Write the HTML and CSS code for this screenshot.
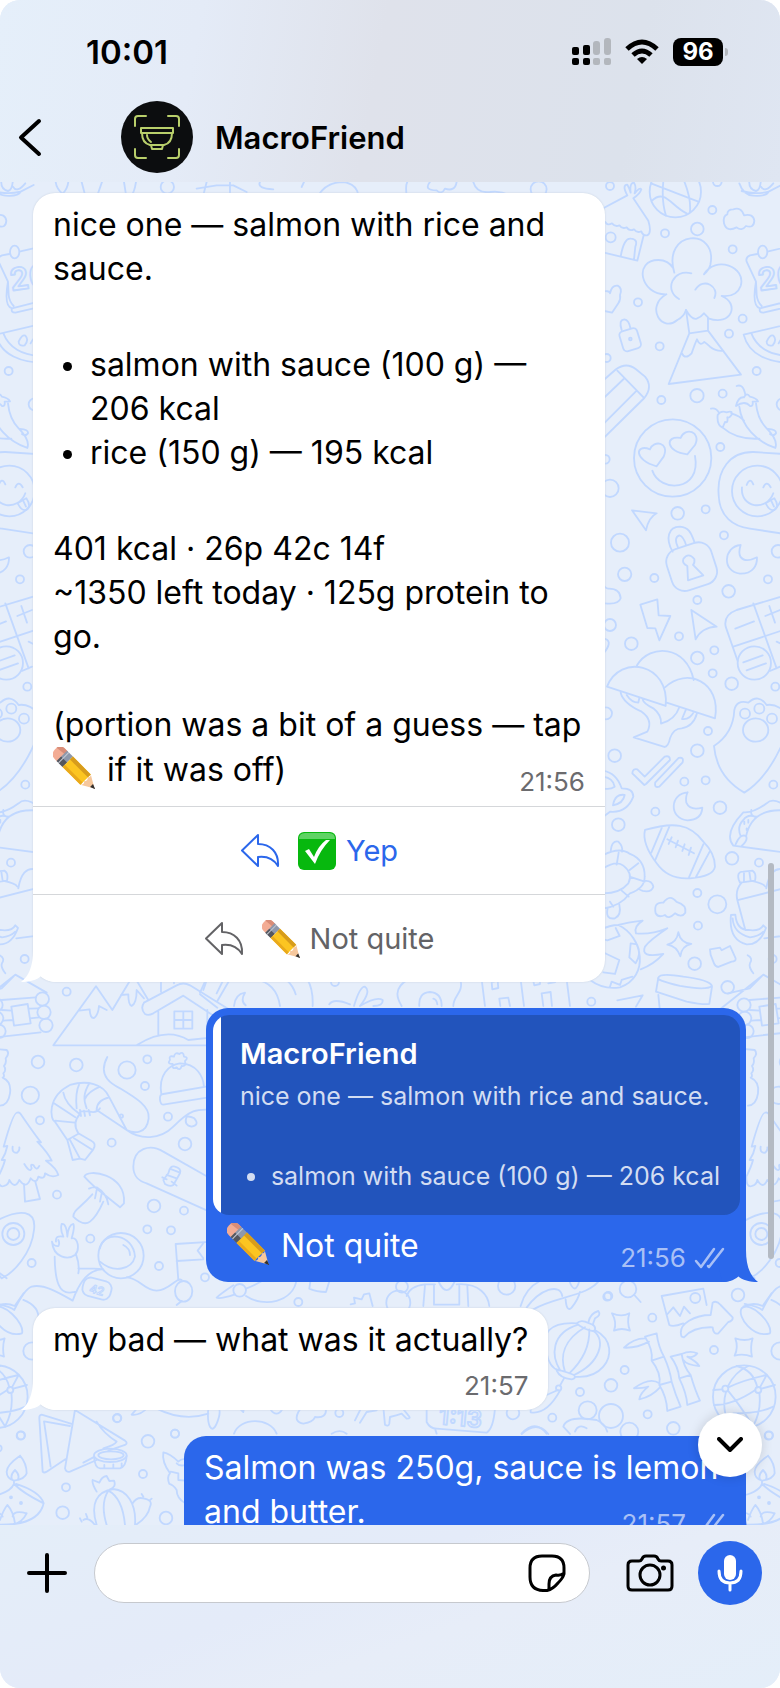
FILE: index.html
```html
<!DOCTYPE html>
<html lang="en">
<head>
	<meta charset="UTF-8">
	<meta name="viewport" content="width=device-width, initial-scale=1">
	<title>MacroFriend</title>
	<link rel="stylesheet" href="styles.css">
</head>
<body>
<!-- shared icons -->
<svg class="defs" width="0" height="0" aria-hidden="true">
	<symbol id="pencil" viewBox="0 0 40 40">
		<g transform="translate(7 7) rotate(45)">
			<path d="M3 -7H0Q-7 -7 -7 0T0 7H3z" fill="#f3ac94"/>
			<path d="M3 -7H0Q-6 -7 -7 -2L3 -3z" fill="#d98d78"/>
			<rect x="2" y="-7" width="8" height="14" fill="#8e98ab"/>
			<rect x="2" y="1" width="8" height="6" fill="#55575e"/>
			<rect x="4" y="-7" width="1" height="14" fill="#c4cad6"/>
			<path d="M10 -7H34V7H10z" fill="#fcc521"/>
			<path d="M10 -7H34V-3H10z" fill="#d79c1c"/>
			<path d="M10 4H34V7H10z" fill="#e9a91b"/>
			<path d="M34 -7L46 0L34 7Q37 4 34 2Q37 0 34 -3Q36 -5 34 -7z" fill="#f6c79c"/>
			<path d="M42 -2L47 0L42 2z" fill="#33302e"/>
		</g>
	</symbol>
	<symbol id="check" viewBox="0 0 38 38">
		<rect width="38" height="38" rx="6" fill="#07b80e"/>
		<path d="M1 7Q1 1 7 1H31Q37 1 37 7z" fill="#5fd364"/>
		<path d="M7 19L11 17L16 25Q20 14 28 8H32Q22 18 17 32z" fill="#fff"/>
	</symbol>
	<symbol id="reply" viewBox="0 0 40 36">
		<path d="M18 2L2 17.500L18 33V24C26 23 33 25 38 33C39 19 30 11 18 11z" fill="none" stroke="currentColor" stroke-width="2" stroke-linejoin="round"/>
	</symbol>
	<symbol id="ticks" viewBox="0 0 32 22">
		<path d="M2 14L7 20L20 2M14 19L15 20L29 2" fill="none" stroke="currentColor" stroke-width="2.500" stroke-linecap="round" stroke-linejoin="round"/>
	</symbol>
	<symbol id="tail" viewBox="0 0 40 40">
		<path d="M12 0V8C12 24 8 34 0 40C8 40 16 38 20 34C25 38 30 40 36 40L40 20V0z" fill="currentColor"/>
	</symbol>
</svg>

<div class="app">
	<header class="top">
		<div class="status">
			<span class="clock">10:01</span>
			<div class="status-icons">
				<svg width="39" height="28" viewBox="0 0 39 28">
					<g fill="#000">
						<rect x="0" y="9" width="7" height="8" rx="2"/><rect x="11" y="7" width="7" height="10" rx="2"/>
						<rect x="0" y="20" width="7" height="7" rx="2"/><rect x="11" y="20" width="7" height="7" rx="2"/>
					</g>
					<g fill="#b3b7bd">
						<rect x="21" y="3" width="7" height="14" rx="3"/><rect x="32" y="0" width="7" height="17" rx="3"/>
						<rect x="21" y="20" width="7" height="7" rx="2"/><rect x="32" y="20" width="7" height="7" rx="2"/>
					</g>
				</svg>
				<svg width="34" height="26" viewBox="0 0 34 26" fill="none" stroke="#000" stroke-width="5">
					<path d="M2 10Q17 -4 32 10M8 16Q17 8 26 16"/>
					<path d="M12 20Q17 16 22 20L17 25z" fill="#000" stroke="none"/>
				</svg>
				<span class="battery">96</span>
			</div>
		</div>
		<div class="bar">
			<button class="icon-btn back" aria-label="Back">
				<svg width="24" height="40" viewBox="0 0 24 40"><path d="M21 4L3 20.500L21 37" fill="none" stroke="#000" stroke-width="4" stroke-linecap="round" stroke-linejoin="round"/></svg>
			</button>
			<svg class="avatar" viewBox="0 0 72 72">
				<circle cx="36" cy="36" r="36" fill="#0c0d0f"/>
				<g fill="none" stroke="#b9cf6b" stroke-width="2" stroke-linecap="round" stroke-linejoin="round">
					<path d="M14 25V18Q14 15 17 15H25M47 15H55Q58 15 58 18V25M14 48V54Q14 57 17 57H25M47 57H55Q58 57 58 54V48"/>
					<path d="M20 27H52V32H20zM21 32Q21 42 29 44H43Q51 42 51 32M26 34Q26 38 30 41M30 44L31 48H41L42 44"/>
				</g>
			</svg>
			<h1 class="name">MacroFriend</h1>
		</div>
	</header>

	<main class="chat">
		<svg class="wallpaper" viewBox="0 182 780 1343" preserveAspectRatio="xMidYMin slice" aria-hidden="true">
			<defs>
			<g id="tile" stroke-width="5.500" stroke-linecap="round" stroke-linejoin="round">
				<!-- upper right: hut, volcano, smiley, padlock -->
				<g transform="translate(590 180) scale(.3333)">
					<circle cx="60" cy="18" r="12"/><circle cx="367" cy="90" r="12"/><circle cx="225" cy="160" r="12"/><circle cx="322" cy="147" r="19"/>
					<circle cx="428" cy="208" r="12"/><circle cx="62" cy="172" r="15"/><circle cx="144" cy="367" r="12"/><circle cx="209" cy="499" r="12"/>
					<circle cx="50" cy="534" r="12"/><circle cx="458" cy="416" r="12"/><circle cx="417" cy="461" r="12"/><circle cx="500" cy="573" r="12"/>
					<circle cx="214" cy="660" r="12"/><circle cx="321" cy="647" r="20"/><circle cx="398" cy="641" r="12"/><circle cx="391" cy="801" r="12"/>
					<circle cx="578" cy="673" r="18"/><circle cx="60" cy="925" r="26"/><circle cx="46" cy="838" r="13"/><circle cx="263" cy="1000" r="19"/>
					<circle cx="347" cy="988" r="12"/><circle cx="402" cy="1066" r="12"/><circle cx="90" cy="1088" r="27"/><circle cx="104" cy="1183" r="20"/>
					<circle cx="193" cy="1194" r="12"/><circle cx="416" cy="1234" r="19"/><circle cx="534" cy="1198" r="12"/><circle cx="564" cy="1114" r="19"/>
					<circle cx="382" cy="5" r="13"/>
					<path d="M448 10Q460 45 490 47Q530 50 536 35L575 15M455 33Q495 45 536 35M478 0Q475 28 498 33Q513 30 513 -10M513 20Q525 40 550 10"/>
					<circle cx="256" cy="35" r="77"/>
					<path d="M183 10L325 65M186 62C225 25 245 80 290 100M225 -30Q210 50 228 107M262 -40Q305 40 300 95"/>
					<path d="M30 90L112 46Q95 15 112 14Q118 25 122 38Q118 8 132 8Q140 20 134 40Q150 20 154 28Q150 42 130 55L175 122Q186 158 172 166Q158 168 154 154Q140 160 132 148Q118 155 110 142Q96 148 88 136Q76 142 66 130Q52 138 46 126L30 130M161 166L142 242L92 230L30 215M92 230Q102 172 123 176Q145 178 136 200L132 238"/>
					<path d="M412 103Q412 88 430 88Q454 80 462 106Q490 100 493 122Q492 146 468 138Q455 155 440 142Q410 158 402 130Q398 108 412 103"/>
					<path d="M253 278C215 150 385 140 361 255Q357 270 342 283C375 225 470 260 452 318Q440 352 395 348C450 370 425 440 355 415M229 343C150 345 130 240 205 240Q235 240 250 265M229 343C165 380 215 460 262 420Q282 410 288 390M304 280C250 265 220 330 267 357M316 329C340 290 390 320 373 354"/>
					<path d="M288 390Q305 420 320 416Q335 410 342 400L354 412V452L298 460zM298 460L236 612L453 584L354 452M276 520Q285 540 305 520Q315 490 321 478Q330 500 343 486Q350 490 360 500Q380 515 400 512"/>
					<path d="M30 335Q60 330 60 340Q65 315 83 317Q98 325 90 345Q93 358 85 370L66 398L30 390"/>
					<rect x="93" y="448" width="55" height="62" rx="12" transform="rotate(-17 121 479)"/><path d="M95 450Q85 420 103 418Q117 420 121 444"/><circle cx="121" cy="477" r="4"/>
					<path d="M30 610L78 568Q110 545 138 568L165 590Q190 620 163 654L40 775M82 572L162 654M101 597L30 665M140 632L30 742"/>
					<path d="M640 190L535 214M502 222L480 226Q466 232 470 245L498 305Q485 380 510 385L640 352M510 385Q506 398 520 398L640 370M498 305L500 345Q502 365 515 378"/><ellipse cx="518" cy="216" rx="14" ry="19"/>
					<text x="508" y="332" font-size="92" transform="rotate(-8 508 332)">26</text>
					<path d="M640 422L461 464C475 520 530 555 640 548M484 460C500 500 540 530 600 526M530 485Q540 462 550 467Q562 480 548 496Q530 500 530 485M566 490Q580 462 588 480"/>
					<path d="M440 618Q460 610 466 645M438 678Q445 650 462 652Q470 635 480 650Q500 655 504 664L488 665Q490 680 480 678Q465 660 438 678M448 680C455 740 500 785 556 804Q565 780 530 745C505 720 500 690 498 670M363 686Q378 682 388 700M398 743Q380 735 383 705Q392 690 410 697Q430 690 424 706Q418 715 412 712Q415 730 405 726zM398 743Q440 780 508 776M424 700Q450 708 462 722M534 747Q560 748 558 760Q550 770 540 762"/>
					<circle cx="248" cy="834" r="116"/><path d="M187 872C210 940 335 935 315 828M200 859C130 840 135 790 180 808C190 780 240 785 221 830zM292 823C225 815 225 765 272 774C285 740 335 755 315 795z"/>
					<path d="M700 830L490 816C420 815 380 870 386 945C388 1010 430 1040 480 1046L700 1080"/><circle cx="502" cy="933" r="76"/>
					<path d="M456 922C450 985 530 995 550 940M470 915Q480 890 490 913M520 922Q530 900 542 922M527 970L553 955Q570 980 553 990Q540 995 527 970M545 965L552 980"/>
					<path d="M126 991L200 1000Q176 1012 168 1051z"/>
					<rect x="235" y="1095" width="140" height="130" rx="40" transform="rotate(-18 305 1160)"/><path d="M248 1115C225 1075 235 1040 270 1040C300 1042 305 1065 314 1088M264 1102Q250 1072 268 1066Q280 1068 288 1095M292 1158Q275 1150 280 1137Q295 1115 313 1137Q315 1150 309 1155L340 1186L294 1201z"/>
					<path d="M452 1095C400 1100 395 1175 450 1181C490 1182 502 1155 501 1132Q465 1150 451 1130Q445 1118 452 1095M38 1210Q45 1225 55 1226Q90 1225 92 1255Q85 1275 45 1270"/>
				</g>
				<!-- top edge under the header -->
				<g transform="translate(0 182) scale(.3333)">
					<path d="M167 0Q170 22 188 35Q202 22 205 0M245 0L255 38M292 40L306 0M372 0L378 38M408 0Q402 40 390 40M590 20L650 10H700L740 30M610 40L620 0M690 40V0M780 0Q770 20 820 22M905 15L912 0M955 40Q980 0 1030 0Q1070 5 1075 40M1220 40Q1216 10 1222 0M1290 0Q1270 25 1310 25Q1325 40 1335 20Q1365 30 1370 0M1420 0Q1430 35 1470 30Q1500 25 1530 40"/>
					<circle cx="502" cy="15" r="20"/><circle cx="1616" cy="22" r="24"/>
				</g>
				<!-- right side: bolt, tree, rugby ball, turtle, football -->
				<g transform="translate(590 600) scale(.3333)">
					<circle cx="60" cy="75" r="18"/><circle cx="124" cy="131" r="19"/><circle cx="267" cy="109" r="12"/><circle cx="322" cy="174" r="19"/>
					<circle cx="373" cy="151" r="12"/><circle cx="368" cy="220" r="12"/><circle cx="425" cy="251" r="19"/><circle cx="556" cy="260" r="12"/>
					<circle cx="48" cy="340" r="18"/><circle cx="354" cy="393" r="12"/><circle cx="322" cy="452" r="19"/><circle cx="74" cy="467" r="19"/>
					<circle cx="283" cy="545" r="12"/><circle cx="347" cy="541" r="12"/><circle cx="550" cy="554" r="12"/><circle cx="390" cy="623" r="19"/>
					<circle cx="196" cy="635" r="12"/><circle cx="85" cy="674" r="19"/><circle cx="426" cy="775" r="19"/><circle cx="507" cy="788" r="12"/>
					<circle cx="322" cy="879" r="12"/><circle cx="382" cy="913" r="27"/><circle cx="324" cy="977" r="12"/><circle cx="314" cy="1091" r="19"/>
					<circle cx="413" cy="1162" r="19"/><circle cx="548" cy="1077" r="12"/><circle cx="322" cy="0" r="12"/>
					<path d="M151 14L202 -2L206 46L241 48L208 121L196 85L172 84zM304 30L380 80Q335 82 317 118zM40 115Q70 120 45 155"/>
					<path d="M640 -30L440 30Q400 45 407 80L443 183M490 10L560 205M430 140L640 70M436 86L492 64M526 48L570 30M538 18L555 68M560 125L580 135M540 213L570 200"/><circle cx="493" cy="189" r="50"/><path d="M460 187L518 166M470 211L528 190"/>
					<path d="M141 196C180 130 290 135 311 240M51 260C90 160 240 190 227 318zM225 262C290 200 395 245 375 355L230 308M92 278Q100 310 155 335Q190 360 172 395L131 412L223 441Q235 440 240 415Q250 385 275 385Q310 380 321 340M158 298Q160 310 190 325Q215 345 213 371Q255 360 268 322M110 285Q125 308 145 308L148 294M288 328L276 357Q300 360 312 335"/>
					<path d="M372 438Q430 400 433 330Q440 298 475 308Q505 280 530 315Q560 310 590 340M372 438Q380 530 463 578Q540 530 590 400"/><circle cx="465" cy="341" r="15"/><circle cx="508" cy="326" r="15"/><circle cx="546" cy="356" r="15"/><ellipse cx="497" cy="390" rx="38" ry="35"/>
					<path d="M163 555L127 520Q128 505 142 508L164 530L224 470Q240 465 240 480L168 552zM196 547L266 474Q282 470 278 487L208 560Q192 565 196 547"/>
					<path d="M293 577C240 580 235 655 292 661Q335 660 337 623Q300 633 289 608Q286 590 293 577"/>
					<path d="M40 512Q80 520 95 565Q130 565 130 590Q110 640 60 635L40 650M40 530Q70 535 74 560Q60 570 40 565M69 616Q75 580 104 585Q100 610 69 616"/>
					<path d="M165 690C250 665 300 670 340 725Q375 760 375 800Q370 830 300 835Q235 840 200 790Q155 730 165 690M216 682L184 758M238 680L195 782M340 733L297 832M359 755L318 831M232 718L312 760M245 712L236 732M264 722L257 742M284 733L277 753M303 743L296 765"/>
					<path d="M640 765L430 737Q400 700 460 637Q490 640 530 610Q550 590 590 620M484 630Q480 650 500 650M468 710C480 650 520 625 590 632M452 708Q440 680 460 660Q475 640 498 652M436 735Q450 700 468 708Q475 720 455 738M463 665V672M475 660V668M470 685V690"/>
					<path d="M40 765Q90 740 120 762Q165 780 164 830Q165 865 120 880Q90 920 40 925M40 805Q80 780 100 797Q130 820 115 850Q90 880 40 880M86 758L80 794M145 790L119 810M164 845L121 831M116 890L95 872M62 755Q65 720 85 725Q100 740 96 755M163 843Q185 840 190 860Q185 878 158 873Q150 870 145 866M53 925Q45 960 75 955Q95 945 88 914M70 920L60 905"/>
					<path d="M197 940Q190 905 220 908Q240 880 260 906Q290 915 286 938Q275 955 255 940Q235 960 225 945Q205 955 197 940"/>
					<path d="M30 990Q60 975 85 975Q110 968 158 962Q130 980 138 1000Q180 1005 232 985Q180 1020 165 1040Q150 1075 220 1062Q190 1095 152 1108M85 975C160 1010 180 1130 90 1162Q40 1170 0 1140M40 1018L52 1021L89 1008L77 984M122 1030L141 1033Q155 1060 137 1090L118 1072zM30 1055L50 1062L88 1080L75 1122L40 1117M60 1160L65 1145L90 1155L95 1140L127 1130"/>
					<path d="M265 997Q272 1030 304 1032Q275 1038 271 1069Q260 1038 232 1034Q260 1028 265 997M362 1065L360 1048L390 1043L395 1051L420 1038L437 1075Q438 1085 425 1085L385 1101Q375 1100 372 1090z"/>
					<path d="M473 1066Q490 1075 480 1090Q475 1100 490 1120M205 1133Q210 1118 280 1130Q360 1140 366 1158Q350 1172 270 1158Q195 1140 205 1133L198 1175L290 1205Q340 1215 358 1212L366 1160M82 1201L158 1186L138 1220M205 1185L210 1235"/>
					<path d="M446 838Q440 815 460 815L488 812Q500 820 495 842L450 848zM462 820V846M478 816L482 842M455 848Q435 870 442 900L466 990M485 843Q520 850 526 860M446 900L640 850M523 1015L640 1000M529 865Q540 800 580 808M423 945L436 944Q440 990 475 990Q510 995 520 976L528 984Q510 1035 470 1033Q415 1020 423 945M428 955Q430 1000 480 1012Q505 1010 520 995"/>
				</g>
				<!-- lower left: cabin, mountains, prawn, spaceman -->
				<g transform="translate(0 960) scale(.3333)">
					<circle cx="200" cy="95" r="12"/><circle cx="114" cy="306" r="19"/><circle cx="229" cy="315" r="19"/><circle cx="381" cy="330" r="26"/>
					<circle cx="442" cy="298" r="12"/><circle cx="435" cy="378" r="12"/><circle cx="91" cy="406" r="26"/><circle cx="120" cy="481" r="12"/>
					<circle cx="504" cy="470" r="12"/><circle cx="335" cy="548" r="12"/><circle cx="555" cy="552" r="19"/><circle cx="171" cy="704" r="12"/>
					<circle cx="462" cy="738" r="19"/><circle cx="552" cy="752" r="12"/><circle cx="442" cy="808" r="12"/><circle cx="513" cy="811" r="12"/>
					<circle cx="271" cy="836" r="12"/><circle cx="95" cy="909" r="12"/><circle cx="477" cy="918" r="12"/><circle cx="615" cy="952" r="12"/>
					<path d="M-80 145L46 44L140 98M46 44L5 85L-60 100M5 120L108 112M-40 235L122 217M5 150L36 152M88 146L115 145M10 182L38 180M90 175L118 172M34 140L83 132L92 190L42 197z"/>
					<circle cx="127" cy="117" r="20"/><circle cx="132" cy="157" r="20"/><circle cx="138" cy="196" r="20"/><circle cx="-12" cy="135" r="20"/><circle cx="-10" cy="175" r="20"/><circle cx="-3" cy="214" r="20"/>
					<path d="M-30 265L20 270Q30 280 17 295Q20 310 12 318Q20 330 10 340Q15 350 8 353Q35 365 30 400Q25 435 0 437"/>
					<path d="M660 256H160L288 79L337 150L400 45L445 120M237 152L269 148Q270 175 282 174Q295 165 297 138L320 150M363 105L385 103Q385 135 395 138Q410 130 410 90L432 115M475 155V226M622 150V230M432 128L530 76Q550 65 570 76L690 150M432 128Q420 145 435 162Q445 168 460 160L550 107L660 180M483 95V50M522 70V50M412 254Q500 200 565 240L640 232M523 154H577V206H523zM550 154V206M523 180H577M610 90L622 55M650 100L670 60"/>
					<path d="M322 291C290 350 340 375 360 385C410 415 450 440 446 475C440 525 400 520 380 510L290 450Q290 420 328 412L380 510C420 540 480 540 520 500C570 450 590 445 640 450M328 412C310 370 260 360 210 375C140 410 150 480 165 485L202 540L218 600L240 596L255 600L280 568Q290 550 275 543L235 520Q215 490 240 462Q235 450 270 455Q290 460 300 445M165 482L225 488M162 430L226 472M190 398Q195 430 236 460M238 372Q225 400 230 445M268 370C250 400 250 420 260 445M300 380Q265 395 256 415M202 540L234 522M210 540L240 596M222 535L278 570M243 468L240 450M255 468L252 452M270 466L266 450"/><circle cx="364" cy="468" r="5"/>
					<path d="M484 402C475 345 505 315 540 310C590 310 610 350 612 380M490 402L640 376M490 434L640 410M490 402Q478 402 480 420Q482 435 492 434M510 300Q505 285 522 290Q525 275 538 282Q550 272 552 290Q568 292 555 303Q560 320 545 318Q540 335 530 322Q515 330 518 312Q500 312 510 300M560 470Q550 495 575 500Q600 495 583 475Q570 468 560 470"/>
					<path d="M52 458Q40 455 11 560L22 558Q18 580 5 600L15 600Q10 620 -5 650Q-5 685 12 678Q25 675 28 660Q45 690 58 660Q80 690 92 655Q110 675 115 650Q135 660 135 640Q155 655 175 645Q170 625 138 602H155Q145 580 112 545L123 547Q105 525 62 462Q58 456 52 458M38 560Q35 580 52 578Q60 570 58 562M73 612Q90 640 95 625Q90 610 100 615Q110 635 118 618M72 672L75 725L120 717L106 665"/>
					<path d="M253 650C260 625 380 640 372 730L360 742L318 708Q280 680 253 650M267 686Q280 680 290 682Q320 700 325 733M277 703C240 745 220 750 220 770Q250 800 270 785Q290 770 310 725M290 690L285 715M305 700L300 725"/>
					<path d="M640 660L490 575C450 550 400 565 400 620C400 650 420 665 440 670L640 760M505 640Q510 615 525 620Q545 625 540 640L520 675Q510 682 495 672L490 660zM500 645L530 655M487 652L500 658M511 627L540 638M515 665L530 677"/>
					<path d="M-10 782C60 745 110 750 102 810C95 880 40 940 5 955L-20 925L20 955M-40 800L-10 782"/><circle cx="40" cy="822" r="33"/><circle cx="40" cy="822" r="18"/>
					<circle cx="363" cy="887" r="68"/><path d="M300 865C310 810 400 820 405 890C395 930 340 940 300 905M370 855Q390 865 390 885M156 845C160 895 205 900 225 885C240 870 235 830 215 835Q225 800 220 792Q205 795 202 830Q200 790 185 792Q180 810 190 830Q165 825 168 845M156 845Q160 860 175 858Q180 850 175 840M164 890C165 970 180 1000 210 998L230 995M228 883Q240 915 235 940M235 925Q290 925 310 928M218 1022C240 960 270 930 305 928M218 1022C180 1000 130 970 95 980C80 985 60 1015 43 1050Q30 1040 -10 1032M380 952C420 955 430 990 470 992C510 990 530 950 545 960M527 852L535 960M527 852L640 845M530 903L610 898M610 850L593 872L610 895"/><rect x="248" y="958" width="86" height="56" rx="22" transform="rotate(15 291 986)"/>
					<text x="266" y="996" font-size="34" stroke-width="3" transform="rotate(15 266 996)">42</text>
					<ellipse cx="551" cy="994" rx="26" ry="31"/><path d="M545 1023L530 1035M70 1020Q120 1040 115 1080"/>
				</g>
				<!-- strips between the bubbles -->
				<g transform="translate(200 976) scale(.3333)">
					<path d="M0 50L18 10M0 55L52 95M52 75L90 10M165 10Q230 20 240 90M322 10Q340 40 338 90M260 12Q280 30 287 55M102 90Q105 55 135 50Q120 75 137 88M388 85Q400 65 450 85M462 90Q480 30 495 32Q515 45 480 90Q530 60 548 72Q550 90 520 90M625 10C570 40 600 80 605 90M782 15C790 50 760 60 760 90M658 90Q655 50 690 48Q725 50 725 90M700 68Q710 70 712 85M845 10L855 90M962 10L972 90M1100 10L1110 90M875 18L893 14L895 36L877 40zM925 15L945 12M1000 15L1003 28L1020 24V10M1045 22L1066 18M898 68L925 65L930 90M898 68L901 90M1025 52L1052 48L1056 90M1025 52L1030 90"/><circle cx="405" cy="18" r="12"/><circle cx="1174" cy="77" r="12"/>
				</g>
				<g transform="translate(110 1276) scale(.3333)">
					<circle cx="389" cy="43" r="19"/><circle cx="565" cy="78" r="12"/><circle cx="1190" cy="30" r="26"/><circle cx="876" cy="32" r="18"/><circle cx="865" cy="80" r="36"/><circle cx="1492" cy="62" r="12"/>
					<path d="M370 28Q330 55 320 65Q330 70 375 55M408 38Q440 25 465 10M408 60C460 95 550 80 560 10M602 10L598 38Q620 48 648 48L660 10M722 85L735 82L732 65L755 70L762 55L778 52L788 90M890 60Q900 30 945 25H975M945 28L940 90M972 28V86H1048V28M1040 25C1110 20 1135 60 1138 90M1072 28L1075 90M985 15Q1010 70 1035 15M1232 90C1240 60 1260 30 1290 15M1250 95C1290 40 1350 20 1357 60M1270 100C1340 60 1440 60 1470 10M1378 15Q1395 60 1408 15M1367 70Q1370 110 1385 95Q1405 70 1410 48"/>
				</g>
				<g transform="translate(110 1402) scale(.3333)">
					<circle cx="22" cy="48" r="12"/><circle cx="195" cy="95" r="12"/><circle cx="688" cy="33" r="12"/><circle cx="1209" cy="33" r="19"/><circle cx="1327" cy="47" r="12"/>
					<path d="M65 38L85 15M65 38Q90 42 115 15M140 20Q220 60 295 35M295 20C290 70 305 100 320 65Q335 30 325 15M385 15L400 30L402 15M480 20Q500 50 518 20M565 30Q550 60 580 65Q610 60 615 45Q650 50 648 20M565 30L575 15M372 95C390 45 480 45 500 95M735 55L755 15M750 62L770 30L800 25M820 15L825 68Q835 75 838 65L840 45Q860 40 875 35L890 50Q905 50 895 40L875 15M950 20V60Q960 80 980 80L1130 92Q1150 80 1155 20M975 80L980 95M665 95Q690 80 710 95M1235 95Q1275 50 1310 95"/>
					<text x="985" y="66" font-size="72" transform="rotate(5 985 66)">1:13</text>
				</g>
				<!-- lower right: lantern, bamboo, globe -->
				<g transform="translate(400 1290) scale(.3333)">
					<circle cx="625" cy="18" r="12"/><circle cx="757" cy="83" r="12"/><circle cx="942" cy="180" r="12"/><circle cx="1014" cy="15" r="19"/><circle cx="674" cy="240" r="12"/>
					<circle cx="633" cy="286" r="19"/><circle cx="540" cy="306" r="12"/><circle cx="743" cy="373" r="12"/><circle cx="563" cy="361" r="27"/><circle cx="633" cy="378" r="36"/>
					<circle cx="820" cy="415" r="19"/><circle cx="688" cy="425" r="27"/><circle cx="1106" cy="437" r="12"/><circle cx="1140" cy="183" r="26"/><circle cx="886" cy="24" r="15"/>
					<circle cx="684" cy="-3" r="25"/><path d="M703 15L722 36"/>
					<path d="M530 100C450 95 420 130 440 190Q450 235 475 240M585 120C640 150 635 200 610 230Q580 265 525 260M530 100Q540 90 555 95L580 105Q590 115 582 124Q550 118 530 100M565 98Q570 70 595 63Q605 75 585 85L578 105M470 242Q480 237 522 255Q530 265 515 268Q480 265 470 242M535 104C450 130 455 200 480 240M555 112C490 150 480 200 495 245M568 118C570 180 540 220 508 250M580 122C620 150 600 220 522 255M492 265L480 287M474 300Q430 320 392 335V367Q440 375 480 302"/><circle cx="476" cy="294" r="8"/>
					<path d="M636 70Q665 82 688 70Q680 98 690 122Q665 112 642 122Q652 98 636 70M1006 145Q1035 155 1058 145Q1050 172 1056 200Q1030 190 1004 197Q1016 172 1006 145"/>
					<path d="M785 18L910 -4L920 45M785 18L808 105Q820 112 850 100M800 75L820 52L840 78L852 50L870 70M845 140C830 100 890 75 932 75L938 38Q950 30 962 45L998 82Q1000 92 985 96L955 130Q940 135 938 112Q880 110 852 142zM1025 55C1050 30 1120 100 1110 130C1060 145 1010 80 1025 55M1030 50Q1060 35 1088 48L1115 10"/>
					<path d="M735 140L770 130Q775 170 792 200L755 212Q760 180 735 140M755 212Q785 250 778 285L815 275Q810 240 792 200M778 285Q800 320 802 363L842 350Q825 310 815 275M735 145Q700 145 672 173Q710 175 747 155M812 200L845 192Q850 230 872 255L838 265Q835 230 812 200M838 265Q860 310 862 345L900 332Q885 300 872 255M845 192Q870 180 892 190Q880 205 862 200Q890 215 898 228Q860 225 850 210M778 280Q750 260 702 295Q730 295 745 290Q720 310 718 328Q755 320 780 292"/>
					<circle cx="1033" cy="320" r="94"/><circle cx="976" cy="296" r="9"/><circle cx="1075" cy="300" r="9"/><path d="M940 300L967 298M983 290Q1005 245 1045 228M985 292Q1030 270 1100 255M984 302Q1020 345 1060 410M978 306Q965 350 985 400M1066 300Q1000 345 942 345M1084 296L1125 285M1078 308Q1085 360 1060 408M1072 292Q1060 240 1010 228M1080 292L1100 255M1000 370Q1080 370 1120 350"/>
					<path d="M490 410Q500 375 590 390Q615 400 622 425M525 425Q535 400 560 415M490 410L510 432M365 432Q410 390 445 432"/>
				</g>
				<!-- bottom left: playing cards, diya, cactus, fox -->
				<g transform="translate(0 1290) scale(.3333)">
					<circle cx="63" cy="436" r="12"/><circle cx="351" cy="385" r="12"/><circle cx="525" cy="431" r="12"/><circle cx="444" cy="454" r="19"/><circle cx="429" cy="552" r="12"/>
					<circle cx="198" cy="592" r="12"/><circle cx="188" cy="668" r="19"/><circle cx="498" cy="684" r="19"/><circle cx="-5" cy="475" r="10"/><circle cx="33" cy="622" r="3"/><circle cx="63" cy="639" r="3"/>
					<path d="M215 402L125 374Q117 375 118 385L128 545Q132 550 140 545L196 508M210 408L132 394L152 530M225 360L195 535Q198 548 210 545L290 510M225 360L375 452Q385 460 375 465L325 482M290 395Q310 430 350 455Q345 465 310 475M280 502L250 518"/>
					<ellipse cx="331" cy="496" rx="49" ry="20"/><ellipse cx="333" cy="496" rx="38" ry="12"/><path d="M282 500Q285 535 300 535H360Q378 530 380 498M313 535V525M340 535V523M365 532V520"/>
					<path d="M60 497Q20 525 20 545Q20 565 42 572V580M60 497Q80 520 80 550Q75 568 42 572M45 540Q30 555 36 568M45 540Q60 555 54 568M42 582Q30 610 -30 620M42 582Q70 610 131 640C120 690 60 715 -60 700M48 582Q120 605 131 640M0 690Q10 660 22 645Q40 665 45 700M-30 665Q5 668 8 680M80 670Q40 660 38 680M80 670Q65 700 40 702"/>
					<path d="M290 705C270 640 290 605 340 597C380 600 410 640 405 705M320 705Q300 640 325 602M375 705C370 650 350 615 325 602M398 640Q410 620 430 625Q460 630 450 650Q445 680 410 703M290 605Q275 580 278 570L298 578Q305 560 320 558L328 573L342 572Q350 590 330 598M250 690Q265 680 285 705M245 695L240 685M262 683L258 672M430 620L425 612M448 632L455 626"/>
					<path d="M556 508Q545 505 535 515Q510 490 490 487Q485 515 510 550Q500 560 508 582Q520 585 530 600Q530 625 556 640M512 545L535 550V570L556 572M530 520Q540 530 556 525"/>
				</g>
			</g>
			</defs>
			<use href="#tile"/>
			<use href="#tile" x="748"/>
			<use href="#tile" x="-748"/>
		</svg>

		<div class="messages">
			<article class="bubble in has-keys">
				<div class="text">
					<p>nice one — salmon with rice and sauce.</p>
					<ul>
						<li>salmon with sauce (100 g) — 206 kcal</li>
						<li>rice (150 g) — 195 kcal</li>
					</ul>
					<p>401 kcal · 26p 42c 14f<br>~1350 left today · 125g protein to go.</p>
					<p class="note">(portion was a bit of a guess — tap <svg class="emoji" role="img" aria-label="pencil"><use href="#pencil"/></svg> if it was off)</p>
					<div class="meta over"><time>21:56</time></div>
				</div>
				<div class="keys">
					<button class="key yes"><svg class="reply"><use href="#reply"/></svg><svg class="emoji"><use href="#check"/></svg>Yep</button>
					<button class="key no"><svg class="reply"><use href="#reply"/></svg><svg class="emoji"><use href="#pencil"/></svg>Not quite</button>
				</div>
				<svg class="tail"><use href="#tail"/></svg>
			</article>

			<article class="bubble out has-quote">
				<blockquote class="quote">
					<strong>MacroFriend</strong>
					<p>nice one — salmon with rice and sauce.</p>
					<ul><li>salmon with sauce (100 g) — 206 kcal</li></ul>
				</blockquote>
				<div class="text">
					<p><svg class="emoji" role="img" aria-label="pencil"><use href="#pencil"/></svg> Not quite</p>
					<div class="meta over"><time>21:56</time><svg class="ticks"><use href="#ticks"/></svg></div>
				</div>
				<svg class="tail"><use href="#tail"/></svg>
			</article>

			<article class="bubble in">
				<div class="text">
					<p>my bad — what was it actually?</p>
					<div class="meta"><time>21:57</time></div>
				</div>
				<svg class="tail"><use href="#tail"/></svg>
			</article>

			<article class="bubble out">
				<div class="text">
					<p>Salmon was 250g, sauce is lemon and butter.</p>
					<div class="meta over"><time>21:57</time><svg class="ticks"><use href="#ticks"/></svg></div>
				</div>
				<svg class="tail"><use href="#tail"/></svg>
			</article>
		</div>

		<div class="thumb"></div>
		<button class="icon-btn to-bottom" aria-label="Scroll to bottom">
			<svg width="26" height="16" viewBox="0 0 26 16"><path d="M2 2L13 13L24 2" fill="none" stroke="#000" stroke-width="4" stroke-linecap="round" stroke-linejoin="round"/></svg>
		</button>
	</main>

	<footer class="composer">
		<button class="icon-btn" aria-label="Attach">
			<svg width="40" height="40" viewBox="0 0 40 40"><path d="M20 2V38M2 20H38" stroke="#000" stroke-width="4" stroke-linecap="round"/></svg>
		</button>
		<div class="field">
			<input type="text" aria-label="Message">
			<button class="icon-btn" aria-label="Stickers">
				<svg width="38" height="38" viewBox="0 0 38 38" fill="none" stroke="#000" stroke-width="3" stroke-linejoin="round"><path d="M19 36.500H15Q2 36 2 23V14Q2 2 14 2H24Q36 2 36 14V20Q35 24 30 29Q25 35 19 36.500zM21 36V30Q21 22 28 21Q33 22 36 19"/></svg>
			</button>
		</div>
		<button class="icon-btn camera" aria-label="Camera">
			<svg width="48" height="38" viewBox="0 0 48 38" fill="none" stroke="#000" stroke-width="3" stroke-linejoin="round"><path d="M6 7H13Q15 7 16 5Q17 2 20 2H28Q31 2 32 5Q33 7 35 7H42Q46 7 46 11V32Q46 36 42 36H6Q2 36 2 32V11Q2 7 6 7z"/><circle cx="24" cy="21" r="10"/><circle cx="37.500" cy="14" r="2.500" fill="#000" stroke="none"/></svg>
		</button>
		<button class="icon-btn mic" aria-label="Record voice message">
			<svg width="26" height="38" viewBox="0 0 26 38"><rect x="7" y="1" width="12" height="25" rx="6" fill="#fff"/><path d="M2 17Q2 29 13 29T24 17M13 29V36" fill="none" stroke="#fff" stroke-width="3" stroke-linecap="round"/></svg>
		</button>
	</footer>
</div>
</body>
</html>
```

FILE: styles.css
```css
*{margin:0;padding:0;box-sizing:border-box}
body{
	background:#fff;
	font-family:Inter,"Liberation Sans",sans-serif;
	color:#000;
}
button,input{font:inherit;color:inherit;border:0;background:none}
ul{list-style:none}
.defs{position:absolute}
.app{
	display:flex;
	flex-direction:column;
	height:100vh;
	overflow:hidden;
	border-radius:20px;
	background:#e6eefa;
}
.icon-btn{
	display:flex;
	align-items:center;
	justify-content:center;
	flex:none;
	cursor:pointer;
}

/* header */
.top{
	padding-top:34px;
	background:linear-gradient(100deg,#e5effa 0%,#e4ebf7 25%,#dfe2eb 48%,#dce2ec 80%,#dfe6f2 100%);
}
.status{
	display:flex;
	justify-content:space-between;
	align-items:center;
	height:36px;
	padding:0 57px 0 86px;
	margin-bottom:22px;
}
.clock{font-size:33px;font-weight:600}
.status-icons{display:flex;align-items:center;gap:14px}
.battery{
	position:relative;
	width:50px;
	line-height:28px;
	border-radius:8px;
	background:#000;
	color:#fff;
	font-size:24px;
	font-weight:700;
	text-align:center;
}
.battery::after{
	content:"";
	position:absolute;
	right:-5px;
	top:10px;
	width:3px;
	height:8px;
	border-radius:0 3px 3px 0;
	background:#b3b7bd;
}
.bar{
	display:flex;
	align-items:center;
	height:90px;
	padding:0 18px;
}
.avatar{width:72px;height:72px;margin:0 22px 0 79px}
.name{font-size:31px;font-weight:600}

/* chat */
.chat{
	position:relative;
	flex:1;
	min-height:0;
	overflow:hidden;
}
.wallpaper{
	position:absolute;
	inset:0;
	width:100%;
	height:100%;
	fill:none;
	stroke:#c1d8ff;
	font-weight:600;
}
.messages{
	position:relative;
	display:flex;
	flex-direction:column;
	align-items:flex-start;
	gap:26px;
	padding:11px 34px 0 33px;
}
.bubble{
	position:relative;
	isolation:isolate;
	max-width:572px;
	border-radius:22px;
	font-size:32px;
	line-height:44px;
}
.in{background:#fff;box-shadow:0 0 2px #c5cfdd}
.out{
	align-self:flex-end;
	max-width:562px;
	background:#2b67eb;
	color:#fff;
}
.text{padding:10px 20px 6px}
.text ul{margin:52px 0}
.text li,.quote li{display:flex;align-items:flex-start}
.text li::before{
	content:"";
	flex:none;
	width:9px;
	height:9px;
	margin:19px 18px 0 10px;
	border-radius:50%;
	background:currentColor;
}
.note{margin-top:44px}
.emoji{
	width:42px;
	height:42px;
	margin-right:3px;
	vertical-align:-8px;
	overflow:visible;
}
.meta{
	display:flex;
	justify-content:flex-end;
	align-items:center;
	gap:8px;
	margin-top:6px;
	font-size:26px;
	line-height:36px;
	color:#6b6b6e;
}
.meta.over{margin-top:-28px}
.out .meta{color:#a9c0f6}
.ticks{width:32px;height:22px}
.tail{
	position:absolute;
	left:-12px;
	bottom:0;
	width:40px;
	height:40px;
	color:#fff;
	z-index:-1;
}
.out .tail{
	left:auto;
	right:-12px;
	color:#2b67eb;
	transform:scaleX(-1);
}
.key{
	display:flex;
	align-items:center;
	justify-content:center;
	width:100%;
	height:88px;
	border-top:1px solid #d5d7da;
	font-size:29px;
	cursor:pointer;
}
.key .emoji{width:38px;height:38px;margin:0 10px 0 18px}
.reply{width:40px;height:36px}
.yes{color:#2b67eb}
.no{color:#636366}

/* quoted message */
.has-quote{padding:7px 6px 0 7px}
.has-quote .text{padding:8px 14px 6px}
.quote{
	padding:17px 20px 19px 27px;
	border-radius:16px;
	background:linear-gradient(to right,#fff 8px,#2254bc 8px);
	color:#d3ddf2;
	font-size:25px;
	line-height:40px;
	white-space:nowrap;
}
.quote strong{
	display:block;
	color:#fff;
	font-size:29px;
	font-weight:600;
	line-height:44px;
}
.quote ul{margin-top:40px}
.quote li::before{
	content:"";
	flex:none;
	width:8px;
	height:8px;
	margin:17px 16px 0 7px;
	border-radius:50%;
	background:currentColor;
}

.thumb{
	position:absolute;
	right:6px;
	top:50.700%;
	width:6px;
	height:29.500%;
	border-radius:3px;
	background:#b4bac3;
}
.to-bottom{
	position:absolute;
	right:18px;
	bottom:48px;
	width:64px;
	height:64px;
	border-radius:50%;
	background:#fff;
	box-shadow:0 0 12px rgba(0,0,0,.15);
}

/* composer */
.composer{
	display:flex;
	align-items:center;
	padding:16px 18px 83px 27px;
	background:linear-gradient(160deg,#e4eef9,#e4ebf9 40%,#e7edf8 60%,#e4eef9);
}
.field{
	display:flex;
	align-items:center;
	flex:1;
	min-width:0;
	height:60px;
	margin:0 36px 0 27px;
	padding:0 23px;
	border:1px solid #c6c9ce;
	border-radius:30px;
	background:#fff;
}
.field input{flex:1;min-width:0;height:100%;outline:0;font-size:32px}
.camera{margin-right:24px}
.mic{
	width:64px;
	height:64px;
	border-radius:50%;
	background:#2b67eb;
}
```
